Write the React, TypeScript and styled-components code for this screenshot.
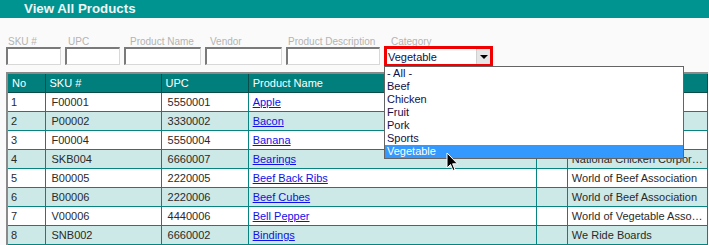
import styled, { createGlobalStyle } from 'styled-components'

/* data */
type Product = {
  no: number
  sku: string
  upc: string
  name: string
  vendor: string
}

const products: Product[] = [
  { no: 1, sku: 'F00001', upc: '5550001', name: 'Apple', vendor: 'Fruit Farm' },
  { no: 2, sku: 'P00002', upc: '3330002', name: 'Bacon', vendor: 'Pork Co.' },
  { no: 3, sku: 'F00004', upc: '5550004', name: 'Banana', vendor: 'Fruit Farm' },
  { no: 4, sku: 'SKB004', upc: '6660007', name: 'Bearings', vendor: 'National Chicken Corporation' },
  { no: 5, sku: 'B00005', upc: '2220005', name: 'Beef Back Ribs', vendor: 'World of Beef Association' },
  { no: 6, sku: 'B00006', upc: '2220006', name: 'Beef Cubes', vendor: 'World of Beef Association' },
  { no: 7, sku: 'V00006', upc: '4440006', name: 'Bell Pepper', vendor: 'World of Vegetable Association' },
  { no: 8, sku: 'SNB002', upc: '6660002', name: 'Bindings', vendor: 'We Ride Boards' },
]

const categories = ['- All -', 'Beef', 'Chicken', 'Fruit', 'Pork', 'Sports', 'Vegetable']

const filters = [
  { label: 'SKU #', width: 55, indent: 2 },
  { label: 'UPC', width: 55, indent: 3 },
  { label: 'Product Name', width: 77, indent: 6 },
  { label: 'Vendor', width: 77, indent: 5 },
  { label: 'Product Description', width: 94, indent: 2 },
]

const GlobalStyle = createGlobalStyle`
  body {
    margin: 0;
    background: #fafafa;
    font-family: "Liberation Sans", Arial, sans-serif;
  }
`

const StyledPage = styled.div`
  position: relative;
  width: 709px;
  height: 245px;
  overflow: hidden;
`

const TitleBar = styled.h1`
  margin: 0;
  height: 18px;
  padding: 0 0 0 24px;
  background: #009490;
  color: #eef5f5;
  font-size: 13.3px;
  font-weight: 700;
  line-height: 18px;
`

const FilterRow = styled.div`
  display: flex;
  align-items: flex-start;
  gap: 4px;
  padding: 18px 0 0 6px;
`

const Field = styled.div`
  display: flex;
  flex-direction: column;
`

const FieldLabel = styled.label<{ $indent: number }>`
  height: 11px;
  padding-left: ${(p) => p.$indent}px;
  color: #b4b4b4;
  font-size: 10px;
  line-height: 11px;
  white-space: nowrap;
`

const TextInput = styled.input<{ $width: number }>`
  box-sizing: border-box;
  width: ${(p) => p.$width}px;
  height: 18px;
  margin: 0;
  padding: 0 2px;
  background: #fff;
  border-style: solid;
  border-color: #7a7a7a #d8d8d8 #d8d8d8 #7a7a7a;
  border-width: 2px 1px 1px 2px;
  outline: none;
`

const CategoryField = styled(Field)`
  position: relative;
`

const SelectBox = styled.div`
  box-sizing: border-box;
  display: flex;
  align-items: center;
  width: 109px;
  height: 21px;
  margin-top: -1px;
  border: 3px solid #f00000;
  background: #fff;

  > .value {
    flex: 1;
    padding-left: 1px;
    color: #10104a;
    font-size: 11px;
  }

  > .arrow {
    box-sizing: border-box;
    display: flex;
    align-items: center;
    justify-content: center;
    width: 14px;
    height: 15px;
    background: #e6e6e6;
    border-left: 1px solid #d0d0d0;
  }

  > .arrow::after {
    content: '';
    border-left: 4px solid transparent;
    border-right: 4px solid transparent;
    border-top: 4px solid #000;
  }
`

const DropList = styled.ul`
  position: absolute;
  z-index: 2;
  top: 100%;
  left: 0;
  box-sizing: border-box;
  width: 300px;
  margin: -1px 0 0;
  padding: 0;
  list-style: none;
  background: #fff;
  border: 1px solid #646464;
`

const DropItem = styled.li<{ $selected?: boolean }>`
  height: 13px;
  padding-left: 2px;
  background: ${(p) => (p.$selected ? '#3399ff' : 'transparent')};
  color: ${(p) => (p.$selected ? '#fff' : '#10104a')};
  font-size: 11px;
  line-height: 13px;
`

const ProductTable = styled.table`
  width: 702px;
  margin: 5px 0 0 6px;
  table-layout: fixed;
  border-collapse: collapse;
  border-top: 2px solid #8a8a8a;
  border-left: 2px solid #8a8a8a;
  font-size: 11px;

  th {
    height: 18px;
    padding: 0 4px;
    background: #007f7d;
    color: #fff;
    font-weight: 400;
    text-align: left;
    border: 1px solid #0b4d4b;
    white-space: nowrap;
    overflow: hidden;
  }

  td {
    height: 18px;
    padding: 0 4px;
    color: #2a2a2a;
    border: 1px solid #078482;
    white-space: nowrap;
    overflow: hidden;
    text-overflow: ellipsis;
  }

  td.code {
    padding-left: 6px;
  }

  td.no {
    padding-left: 3px;
  }

  tbody tr:nth-child(even) td {
    background: #cce8e7;
  }

  tbody tr:nth-child(odd) td {
    background: #fff;
  }

  a {
    color: #1010e8;
    text-decoration: underline;
  }
`

const Cursor = styled.svg`
  position: absolute;
  z-index: 3;
  left: 446px;
  top: 152px;
`

export default function App() {
  return (
    <>
      <GlobalStyle />
      <StyledPage>
        <TitleBar>View All Products</TitleBar>

        <FilterRow>
          {filters.map((f) => (
            <Field key={f.label}>
              <FieldLabel $indent={f.indent}>{f.label}</FieldLabel>
              <TextInput $width={f.width} />
            </Field>
          ))}
          <CategoryField>
            <FieldLabel $indent={7}>Category</FieldLabel>
            <SelectBox>
              <span className="value">Vegetable</span>
              <span className="arrow" />
            </SelectBox>
            <DropList>
              {categories.map((c) => (
                <DropItem key={c} $selected={c === 'Vegetable'}>
                  {c}
                </DropItem>
              ))}
            </DropList>
          </CategoryField>
        </FilterRow>

        <ProductTable>
          <colgroup>
            <col style={{ width: 38 }} />
            <col style={{ width: 116 }} />
            <col style={{ width: 87 }} />
            <col style={{ width: 288 }} />
            <col style={{ width: 31 }} />
            <col style={{ width: 140 }} />
          </colgroup>
          <thead>
            <tr>
              <th>No</th>
              <th>SKU #</th>
              <th>UPC</th>
              <th>Product Name</th>
              <th />
              <th />
            </tr>
          </thead>
          <tbody>
            {products.map((p) => (
              <tr key={p.no}>
                <td className="no">{p.no}</td>
                <td className="code">{p.sku}</td>
                <td className="code">{p.upc}</td>
                <td>
                  <a href="#">{p.name}</a>
                </td>
                <td />
                <td>{p.vendor}</td>
              </tr>
            ))}
          </tbody>
        </ProductTable>

        <Cursor width="13" height="21" viewBox="0 0 13 21">
          <path d="M1 1 L1 16 L4.5 12.5 L7 18.5 L9 17.6 L6.6 11.8 L11.5 11.8 Z" fill="#000" stroke="#fff" strokeWidth="1" />
        </Cursor>
      </StyledPage>
    </>
  )
}
